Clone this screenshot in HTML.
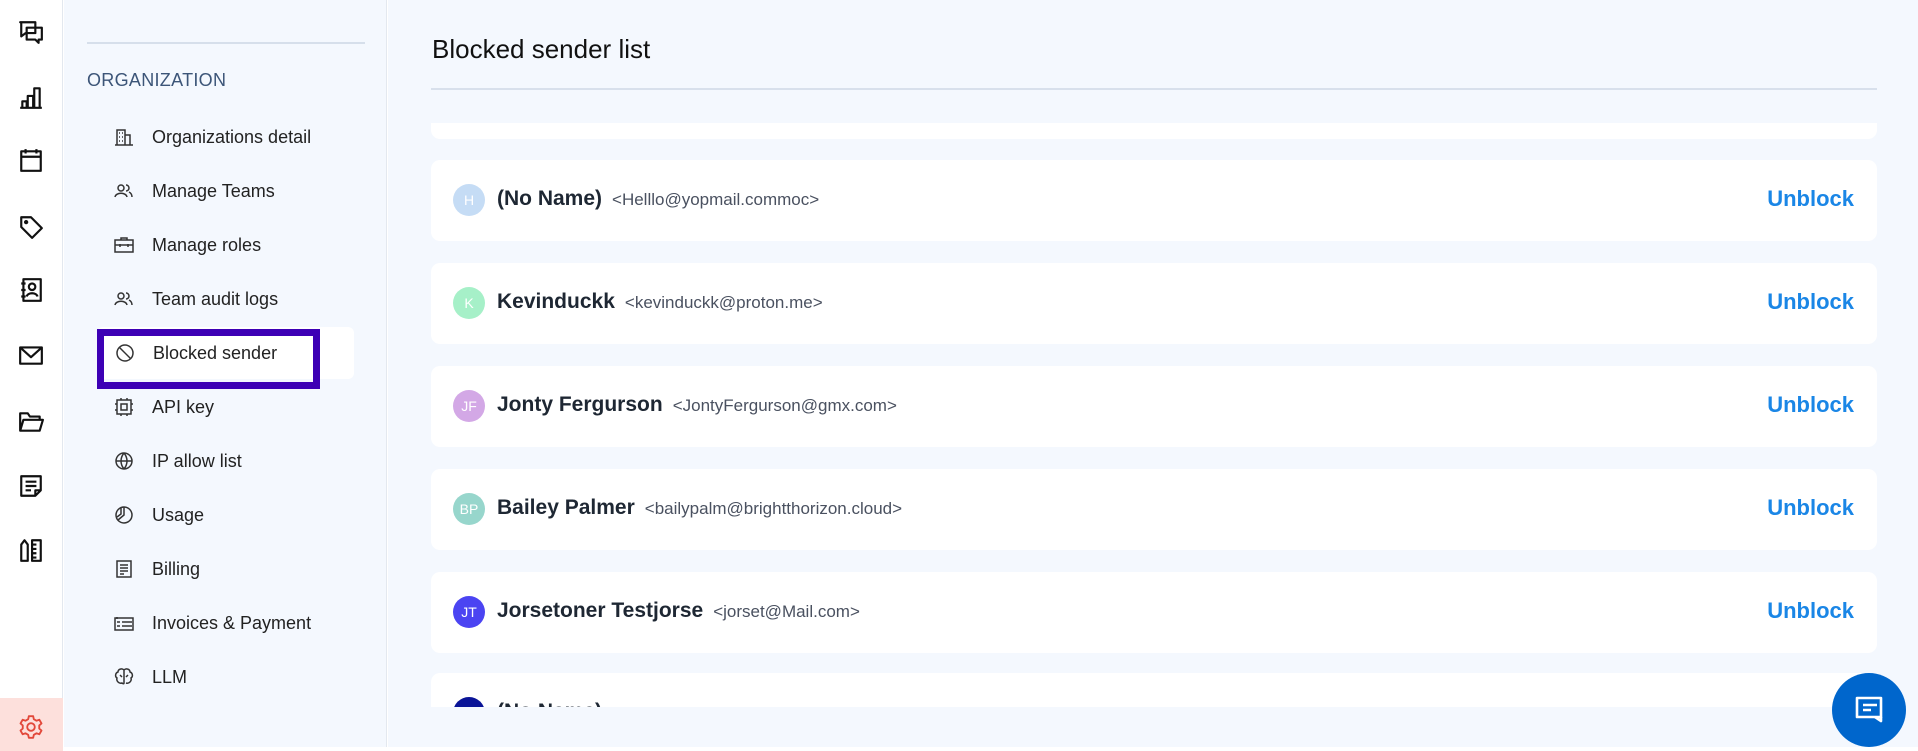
<!DOCTYPE html>
<html><head><meta charset="utf-8"><style>
*{box-sizing:border-box;margin:0;padding:0}
body{width:1918px;height:751px;overflow:hidden;background:#fff;font-family:"Liberation Sans",sans-serif;position:relative;color:#222}
.rail{position:absolute;left:0;top:0;width:63px;height:751px;background:#fff;border-right:1px solid #e3e8ef}
.rail svg{position:absolute;left:18px;width:26px;height:26px;fill:none;stroke:#111;stroke-width:2;stroke-linejoin:round}
.gear{position:absolute;left:0;top:698px;width:63px;height:53px;background:#fde0dc}
.side{position:absolute;left:64px;top:0;width:323px;height:747px;background:#f4f8fe;border-right:1px solid #e3e8ef}
.side .ln{position:absolute;left:23px;top:42px;width:278px;height:2px;background:#d6dfeb}
.side .org{position:absolute;left:23px;top:70px;font-size:18px;color:#3c5578;letter-spacing:.3px}
.it{position:absolute;left:88px;font-size:18px;color:#222;line-height:22px}
.ic{position:absolute;left:50px;width:20px;height:20px;fill:none;stroke:#333;stroke-width:1.5}
.sel{position:absolute;left:33px;top:327px;width:257px;height:52px;background:#fff;border-radius:6px}
.box{position:absolute;left:33px;top:329px;width:223px;height:60px;border:7px solid #3d00b5}
.main{position:absolute;left:388px;top:0;width:1530px;height:747px;background:#f4f8fe}
h1{position:absolute;left:44px;top:34px;font-weight:normal;font-size:26px;color:#111}
.hl{position:absolute;left:43px;top:88px;width:1446px;height:2px;background:#d8e0ec}
.clip{position:absolute;left:43px;top:123px;width:1446px;height:584px;overflow:hidden}
.card{position:absolute;left:0;width:1446px;height:81px;background:#fff;border-radius:9px}
.av{position:absolute;left:22px;top:24px;width:32px;height:32px;border-radius:50%;color:#fff;font-size:14px;text-align:center;line-height:32px}
.nm{position:absolute;left:66px;top:27px;font-size:21px;font-weight:bold;color:#1e2733}
.nm span{font-weight:normal;font-size:17px;color:#4a5160;margin-left:10px}
.ub{position:absolute;right:23px;top:26px;font-size:22px;font-weight:bold;color:#1a86e6}
.fab{position:absolute;left:1832px;top:673px;width:74px;height:74px;border-radius:50%;background:#0066cc}
</style></head><body>
<div class="rail">
<svg style="top:19px" viewBox="0 0 24 24"><path d="M2 3h14v10H7l-4 3V3zM8 8h14v11h-3v3l-3-3H8z"/></svg>
<svg style="top:84px" viewBox="0 0 24 24"><path d="M2 22h20M4 22v-6h4v6M9 22V11h5v11M15 22V4h5v18"/></svg>
<svg style="top:147px" viewBox="0 0 24 24"><rect x="3" y="4" width="18" height="18"/><path d="M3 9h18M7 2v4M17 2v4"/></svg>
<svg style="top:214px" viewBox="0 0 24 24"><path d="M3 3h9l10 10-9 9L3 12z"/><circle cx="7.5" cy="7.5" r="1"/></svg>
<svg style="top:277px" viewBox="0 0 24 24"><rect x="5" y="2" width="16" height="20"/><circle cx="13" cy="9" r="3"/><path d="M8 18c1-4 9-4 10 0M3 6h4M3 12h4M3 18h4"/></svg>
<svg style="top:342px" viewBox="0 0 24 24"><rect x="2" y="5" width="20" height="15"/><path d="M2 5l10 9 10-9"/></svg>
<svg style="top:409px" viewBox="0 0 24 24"><path d="M2 20V4h7l2 3h9v3M2 20l3-10h18l-3 10z"/></svg>
<svg style="top:473px" viewBox="0 0 24 24"><path d="M3 3h18v13l-5 5H3zM16 21v-5h5M7 8h10M7 12h10M7 16h5"/></svg>
<svg style="top:537px" viewBox="0 0 24 24"><path d="M3 7l3-4 3 4v15H3zM13 3h8v19h-8zM13 7h4M13 11h4M13 15h4M13 19h4"/></svg>
<div class="gear"><svg style="top:16px;left:18px;stroke:#e2483a;stroke-width:1.7" viewBox="0 0 24 24"><circle cx="12" cy="12" r="3.5"/><path d="M10 2h4l.6 2.8 2.4 1.4 2.7-.9 2 3.4-2.1 1.9v2.8l2.1 1.9-2 3.4-2.7-.9-2.4 1.4L14 22h-4l-.6-2.8-2.4-1.4-2.7.9-2-3.4 2.1-1.9v-2.8L2.3 8.7l2-3.4 2.7.9 2.4-1.4z"/></svg></div>
</div>
<div class="side">
<div class="ln"></div>
<div class="org">ORGANIZATION</div>
<div class="sel"></div>
<svg class="ic" style="top:127px" viewBox="0 0 20 20"><path d="M1 18h18M3 18V3h8v15M11 8h5v10M5 6h1M8 6h1M5 10h1M8 10h1M5 14h1M8 14h1"/></svg><div class="it" style="top:126px">Organizations detail</div>
<svg class="ic" style="top:181px" viewBox="0 0 20 20"><circle cx="7" cy="7" r="3"/><path d="M1 16c1-5 11-5 12 0M12 4a3 3 0 0 1 0 6M15 11c2 1 3 3 3 5"/></svg><div class="it" style="top:180px">Manage Teams</div>
<svg class="ic" style="top:235px" viewBox="0 0 20 20"><rect x="1" y="5" width="18" height="12"/><path d="M7 5V3h6v2M1 10h18M6 9v3M14 9v3"/></svg><div class="it" style="top:234px">Manage roles</div>
<svg class="ic" style="top:289px" viewBox="0 0 20 20"><circle cx="7" cy="7" r="3"/><path d="M1 16c1-5 11-5 12 0M12 4a3 3 0 0 1 0 6M15 11c2 1 3 3 3 5"/></svg><div class="it" style="top:288px">Team audit logs</div>
<div class="box"></div>
<svg class="ic" style="top:343px;left:51px" viewBox="0 0 20 20"><circle cx="10" cy="10" r="8"/><path d="M4.5 4.5l11 11"/></svg><div class="it" style="top:342px;left:89px">Blocked sender</div>
<svg class="ic" style="top:397px" viewBox="0 0 20 20"><rect x="3" y="3" width="14" height="14"/><rect x="7" y="7" width="6" height="6"/><path d="M7 1v2M13 1v2M7 17v2M13 17v2M1 7h2M1 13h2M17 7h2M17 13h2"/></svg><div class="it" style="top:396px">API key</div>
<svg class="ic" style="top:451px" viewBox="0 0 20 20"><circle cx="10" cy="10" r="8"/><path d="M2 10h16M10 2c-4 5-4 11 0 16M10 2c4 5 4 11 0 16"/></svg><div class="it" style="top:450px">IP allow list</div>
<svg class="ic" style="top:505px" viewBox="0 0 20 20"><circle cx="10" cy="10" r="8"/><path d="M10 2v8l-6 5M7 3v6L3 12"/></svg><div class="it" style="top:504px">Usage</div>
<svg class="ic" style="top:559px" viewBox="0 0 20 20"><rect x="3" y="2" width="14" height="16"/><path d="M6 6h8M6 9h8M6 12h8M6 15h4"/></svg><div class="it" style="top:558px">Billing</div>
<svg class="ic" style="top:613px" viewBox="0 0 20 20"><path d="M1 5h18v12H1zM8 9h10M8 13h10M3 4v2M3 9h3M3 13h3"/></svg><div class="it" style="top:612px">Invoices &amp; Payment</div>
<svg class="ic" style="top:667px" viewBox="0 0 20 20"><path d="M10 3c-2-2-6-1-6 2-3 1-3 5-1 6-1 3 2 6 5 5 1 1 2 1 2 0V3c2-2 6-1 6 2 3 1 3 5 1 6 1 3-2 6-5 5M6 8l2 2M14 8l-2 2"/></svg><div class="it" style="top:666px">LLM</div>
</div>
<div class="main">
<h1>Blocked sender list</h1>
<div class="hl"></div>
<div class="clip">
<div class="card" style="top:-65px"></div>
<div class="card" style="top:37px"><div class="av" style="background:#c5dcf5">H</div><div class="nm">(No Name)<span>&lt;Helllo@yopmail.commoc&gt;</span></div><div class="ub">Unblock</div></div>
<div class="card" style="top:140px"><div class="av" style="background:#a6f0c8">K</div><div class="nm">Kevinduckk<span>&lt;kevinduckk@proton.me&gt;</span></div><div class="ub">Unblock</div></div>
<div class="card" style="top:243px"><div class="av" style="background:#d3a8e6">JF</div><div class="nm">Jonty Fergurson<span>&lt;JontyFergurson@gmx.com&gt;</span></div><div class="ub">Unblock</div></div>
<div class="card" style="top:346px"><div class="av" style="background:#97d6cc">BP</div><div class="nm">Bailey Palmer<span>&lt;bailypalm@brightthorizon.cloud&gt;</span></div><div class="ub">Unblock</div></div>
<div class="card" style="top:449px"><div class="av" style="background:#4b44f2">JT</div><div class="nm">Jorsetoner Testjorse<span>&lt;jorset@Mail.com&gt;</span></div><div class="ub">Unblock</div></div>
<div class="card" style="top:550px"><div class="av" style="background:#0a1497"></div><div class="nm">(No Name)</div></div>
</div>
</div>
<div class="fab"><svg style="position:absolute;left:22px;top:22px" width="30" height="30" viewBox="0 0 30 30" fill="none" stroke="#fff" stroke-width="2.6" stroke-linejoin="round"><path d="M3 3h24v19H3zM9 10h14M9 15h8"/><path d="M21 22l6 4v-4"/></svg></div>
</body></html>
